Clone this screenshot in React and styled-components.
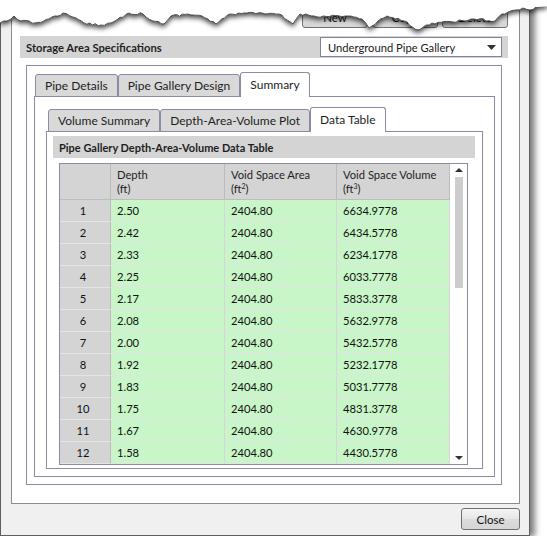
import React from 'react';
import styled, { createGlobalStyle } from 'styled-components';

const GlobalStyle = createGlobalStyle`
  html, body { margin: 0; padding: 0; background: #ffffff; }
  body { font-family: Lato, "Noto Sans", sans-serif; color: #1a1a1a; overflow: hidden; }
  #root { width: 547px; height: 536px; }
`;

const FRAME = '#8b8ba3';

const Page = styled.div`
  position: relative;
  width: 547px;
  height: 536px;
  overflow: hidden;
  background: #fff;
`;

const Window = styled.div`
  box-sizing: border-box;
  width: 530px;
  height: 536px;
  border: 1px solid #5e5e5e;
  background: #f0f0f0;
  box-shadow: 5px 1px 6px rgba(0, 0, 0, 0.5);
  padding: 4px 9px 5px 10px;
  display: flex;
  flex-direction: column;
`;

const Panel = styled.div`
  flex: 1;
  min-height: 0;
  border: 1px solid #8c8c8c;
  background: #fff;
  padding: 0 11px 18px 8px;
  display: flex;
  flex-direction: column;
`;

const ButtonRow = styled.div`
  display: flex;
  justify-content: flex-end;
  gap: 4px;
  margin-bottom: 8px;
`;

const PushButton = styled.button`
  box-sizing: border-box;
  width: ${p => p.$w || 66}px;
  height: 22px;
  border: 1px solid #707070;
  border-radius: 3px;
  background: linear-gradient(#f4f4f4, #e6e6e6 50%, #dcdcdc 51%, #d6d6d6);
  font-family: Lato, "Noto Sans", sans-serif;
  font-size: 11.5px;
  color: #111;
  padding: 0;
`;

const SpecBar = styled.div`
  height: 22px;
  background: #d4d4d4;
  display: flex;
  align-items: center;
  justify-content: space-between;
  padding: 0 6px;
`;

const BarTitle = styled.span`
  font-weight: 700;
  font-size: 11.2px;
  color: #1e1e1e;
`;

const Dropdown = styled.div`
  box-sizing: border-box;
  width: 182px;
  height: 20px;
  border: 1px solid #82829a;
  background: #fff;
  display: flex;
  align-items: center;
  justify-content: space-between;
  padding: 0 5px 0 7px;
  font-size: 11.2px;
`;

const GroupBox = styled.div`
  flex: 1;
  min-height: 0;
  margin: 7px 6px 0;
  border: 1px solid ${FRAME};
  padding: 6px 6px 7px 7px;
  display: flex;
  flex-direction: column;
`;

const TabControl = styled.div`
  flex: 1;
  min-height: 0;
  display: flex;
  flex-direction: column;
`;

const TabStrip = styled.div`
  display: flex;
  align-items: flex-end;
  padding-left: ${p => p.$inset}px;
  margin-bottom: -1px;
  position: relative;
  z-index: 1;
`;

const Tab = styled.div`
  box-sizing: border-box;
  height: ${p => (p.$selected ? 25 : 23)}px;
  padding: ${p => (p.$selected ? '0 9px 1px' : '0 9px')};
  border: 1px solid ${FRAME};
  border-bottom: ${p => (p.$selected ? 'none' : `1px solid ${FRAME}`)};
  border-radius: 3px 3px 0 0;
  background: ${p => (p.$selected ? '#ffffff' : '#d9d9d9')};
  display: flex;
  align-items: center;
  font-size: 12px;
  color: #1e1e1e;
  white-space: nowrap;
`;

const TabFrame = styled.div`
  flex: 1;
  min-height: 0;
  border: 1px solid ${FRAME};
  background: #fff;
  padding: ${p => p.$pad};
  display: flex;
  flex-direction: column;
`;

const DataBar = styled.div`
  height: 22px;
  background: #d4d4d4;
  display: flex;
  align-items: center;
  padding-left: 6px;
  font-weight: 700;
  font-size: 11px;
  color: #1e1e1e;
  flex: none;
`;

const Grid = styled.div`
  flex: 1;
  min-height: 0;
  margin: 5px 7px 0 6px;
  border: 1px solid ${FRAME};
  background: #fff;
  display: flex;
  overflow: hidden;
`;

const TableArea = styled.div`
  width: 390px;
  flex: none;
  overflow: hidden;
  display: grid;
  grid-template-columns: 51px 114px 112px 113px;
  grid-template-rows: 36px;
  grid-auto-rows: 22px;
  align-content: start;
  font-size: 11.2px;
  color: #111;
`;

const HeaderCell = styled.div`
  box-sizing: border-box;
  background: #d4d4d4;
  border-right: 1px solid #bcbcbc;
  border-bottom: 1px solid #bdbdbd;
  padding-left: 6px;
  display: flex;
  flex-direction: column;
  justify-content: center;
  line-height: 14px;
  color: #1e1e1e;
`;

const RowHeader = styled.div`
  box-sizing: border-box;
  background: #d4d4d4;
  border-right: 1px solid #bcbcbc;
  border-bottom: 1px solid #e4e4e4;
  display: flex;
  align-items: center;
  justify-content: center;
  padding-right: 4px;
`;

const DataCell = styled.div`
  box-sizing: border-box;
  background: #c8f6c8;
  border-right: 1px solid #d6d6d6;
  border-bottom: 1px solid #e2e2e2;
  display: flex;
  align-items: center;
  padding-left: 6px;
`;

const Sup = styled.sup`
  font-size: 7px;
  line-height: 0;
  vertical-align: 4px;
`;

const ScrollBar = styled.div`
  width: 17px;
  flex: none;
  background: #fff;
  display: flex;
  flex-direction: column;
  align-items: center;
  padding: 4px 0 4px 1px;
  box-sizing: border-box;
`;

const Thumb = styled.div`
  width: 8px;
  height: 111px;
  margin-top: 5px;
  background: #cdcdcd;
`;

const Spacer = styled.div`
  flex: 1;
`;

const Footer = styled.div`
  display: flex;
  justify-content: flex-end;
  margin-top: 4px;
`;

const TornOverlay = styled.svg`
  position: absolute;
  left: 0;
  top: 0;
  pointer-events: none;
  overflow: visible;
`;

const KEY = [
  [0, 23], [7, 21], [14, 16], [21, 21], [35, 23], [49, 19], [63, 13], [70, 16], [84, 23],
  [101, 25], [111, 23], [129, 13], [143, 14], [153, 21], [164, 24], [171, 16], [188, 14],
  [202, 16], [216, 24], [230, 14], [244, 13], [265, 14], [279, 14], [293, 24], [300, 14],
  [314, 16], [348, 16], [362, 19], [369, 28], [387, 16], [404, 21], [418, 30], [432, 23],
  [453, 22], [474, 19], [495, 21], [502, 14], [516, 10], [523, 8], [530, 10], [536, 7],
];

function tornPoints() {
  let seed = 12345;
  const rnd = () => {
    seed = (seed * 16807) % 2147483647;
    return seed / 2147483647;
  };
  const pts = [];
  for (let k = 0; k < KEY.length - 1; k++) {
    const [x0, y0] = KEY[k];
    const [x1, y1] = KEY[k + 1];
    const steps = Math.max(1, Math.round((x1 - x0) / 3));
    for (let s = 0; s < steps; s++) {
      const t = s / steps;
      const x = x0 + (x1 - x0) * t;
      const y = y0 + (y1 - y0) * t + (s === 0 ? 0 : (rnd() - 0.5) * 2.4);
      pts.push([x, y]);
    }
  }
  pts.push(KEY[KEY.length - 1]);
  return pts;
}

function TornEdge() {
  const pts = tornPoints();
  const line = pts.map(([x, y]) => `${x.toFixed(1)},${y.toFixed(1)}`).join(' ');
  const fill = `M0,0 L${pts.map(([x, y]) => `${x.toFixed(1)},${y.toFixed(1)}`).join(' L')} L547,6 L547,0 Z`;
  return (
    <TornOverlay width="547" height="50" viewBox="0 0 547 50">
      <defs>
        <filter id="tearShadow" x="-5%" y="-50%" width="110%" height="300%">
          <feDropShadow dx="0" dy="3" stdDeviation="2.8" floodColor="#000" floodOpacity="0.7" />
        </filter>
      </defs>
      <path d={fill} fill="#fff" filter="url(#tearShadow)" />
      <polyline points={line} fill="none" stroke="#3c3c3c" strokeWidth="0.9" />
    </TornOverlay>
  );
}

const ROWS = Array.from({ length: 12 }, (_, i) => ({
  n: i + 1,
  depth: (2.5 - i / 12).toFixed(2),
  area: '2404.80',
  volume: ((66349778 - i * 2004000) / 10000).toFixed(4),
}));

function Arrow({ up }) {
  return (
    <svg width="8" height="4" viewBox="0 0 8 4">
      <path d={up ? 'M0,4 L4,0 L8,4 Z' : 'M0,0 L8,0 L4,4 Z'} fill="#333" />
    </svg>
  );
}

export default function App() {
  return (
    <Page>
      <GlobalStyle />
      <Window>
        <Panel>
          <ButtonRow>
            <PushButton>New</PushButton>
            <PushButton>Copy</PushButton>
            <PushButton>Delete</PushButton>
          </ButtonRow>
          <SpecBar>
            <BarTitle>Storage Area Specifications</BarTitle>
            <Dropdown>
              <span>Underground Pipe Gallery</span>
              <svg width="9" height="5" viewBox="0 0 9 5">
                <path d="M0,0 L9,0 L4.5,5 Z" fill="#333" />
              </svg>
            </Dropdown>
          </SpecBar>
          <GroupBox>
            <TabControl>
              <TabStrip $inset={1}>
                <Tab>Pipe Details</Tab>
                <Tab>Pipe Gallery Design</Tab>
                <Tab $selected>Summary</Tab>
              </TabStrip>
              <TabFrame $pad="10px 11px 7px 11px">
                <TabControl>
                  <TabStrip $inset={2}>
                    <Tab>Volume Summary</Tab>
                    <Tab>Depth-Area-Volume Plot</Tab>
                    <Tab $selected>Data Table</Tab>
                  </TabStrip>
                  <TabFrame $pad="4px 7px 3px 6px">
                    <DataBar>Pipe Gallery Depth-Area-Volume Data Table</DataBar>
                    <Grid>
                      <TableArea>
                        <HeaderCell />
                        <HeaderCell>
                          <span>Depth</span>
                          <span>(ft)</span>
                        </HeaderCell>
                        <HeaderCell>
                          <span>Void Space Area</span>
                          <span>(ft<Sup>2</Sup>)</span>
                        </HeaderCell>
                        <HeaderCell>
                          <span>Void Space Volume</span>
                          <span>(ft<Sup>3</Sup>)</span>
                        </HeaderCell>
                        {ROWS.map(r => (
                          <React.Fragment key={r.n}>
                            <RowHeader>{r.n}</RowHeader>
                            <DataCell>{r.depth}</DataCell>
                            <DataCell>{r.area}</DataCell>
                            <DataCell>{r.volume}</DataCell>
                          </React.Fragment>
                        ))}
                      </TableArea>
                      <ScrollBar>
                        <Arrow up />
                        <Thumb />
                        <Spacer />
                        <Arrow />
                      </ScrollBar>
                    </Grid>
                  </TabFrame>
                </TabControl>
              </TabFrame>
            </TabControl>
          </GroupBox>
        </Panel>
        <Footer>
          <PushButton $w={59}>Close</PushButton>
        </Footer>
      </Window>
      <TornEdge />
    </Page>
  );
}
